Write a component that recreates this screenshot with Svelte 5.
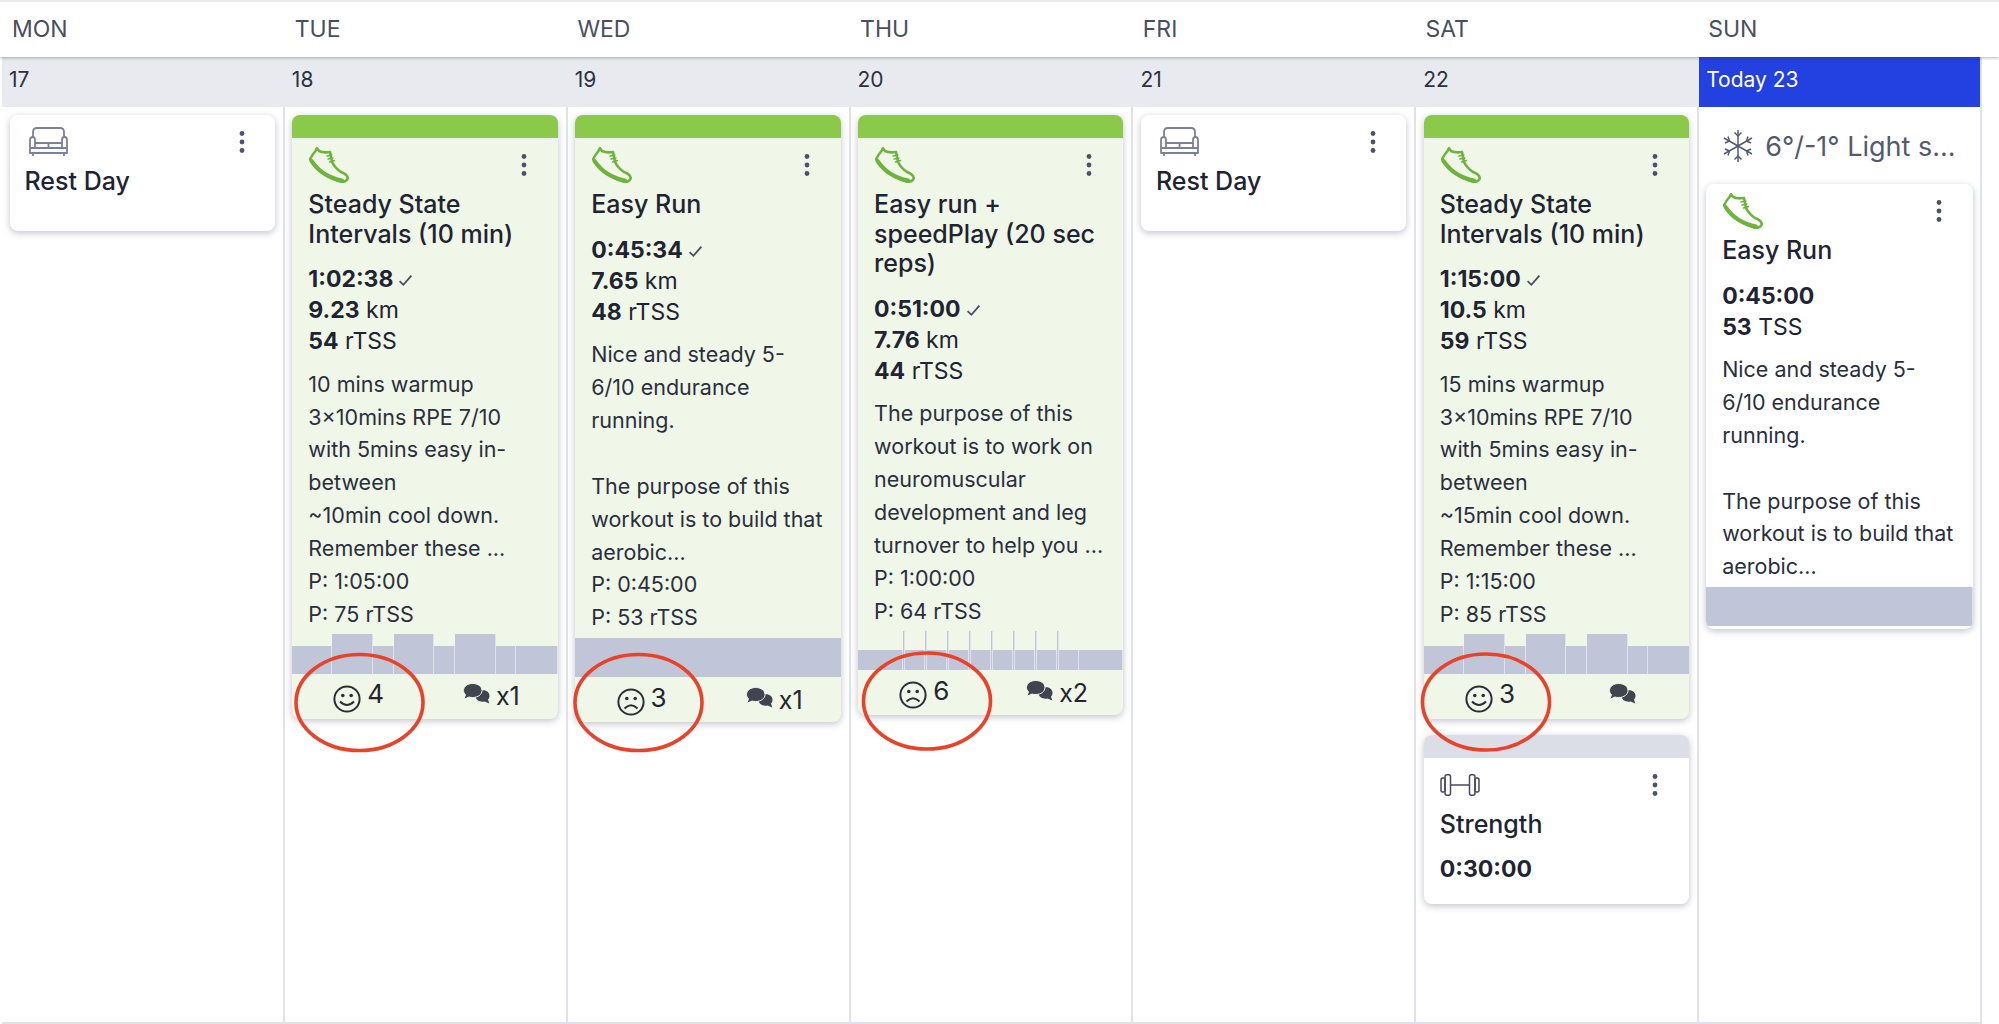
<script>
  const days = ['MON','TUE','WED','THU','FRI','SAT','SUN'];
  const steady = [[40,28],[41,40],[21,28],[40,40],[21,28],[41,40],[20,28],[42,28]];
  const flat = [[267,39]];
  const reps = [[45,20],[1.5,39],[20.5,20],[1.5,39],[20.5,20],[1.5,39],[20.5,20],[1.5,39],[20.5,20],[1.5,39],[20.5,20],[1.5,39],[20.5,20],[1.5,39],[20.5,20],[1.5,39],[20,20],[44,20]];
  const easyDesc = ['Nice and steady 5-','6/10 endurance','running.','','The purpose of this','workout is to build that','aerobic...'];
  const columns = [
    { date:'17', items:[{rest:true}] },
    { date:'18', items:[{ bar:'green', icon:'shoe', title:['Steady State','Intervals (10 min)'], stats:[['1:02:38','',true],['9.23',' km'],['54',' rTSS']],
      desc:['10 mins warmup','3×10mins RPE 7/10','with 5mins easy in-','between','~10min cool down.','Remember these ...','P: 1:05:00','P: 75 rTSS'], chart:steady, mood:'smile', score:'4', chat:'x1' }] },
    { date:'19', items:[{ bar:'green', icon:'shoe', title:['Easy Run'], stats:[['0:45:34','',true],['7.65',' km'],['48',' rTSS']],
      desc:[...easyDesc,'P: 0:45:00','P: 53 rTSS'], chart:flat, mood:'frown', score:'3', chat:'x1' }] },
    { date:'20', items:[{ bar:'green', icon:'shoe', title:['Easy run +','speedPlay (20 sec','reps)'], stats:[['0:51:00','',true],['7.76',' km'],['44',' rTSS']],
      desc:['The purpose of this','workout is to work on','neuromuscular','development and leg','turnover to help you ...','P: 1:00:00','P: 64 rTSS'], chart:reps, mood:'frown', score:'6', chat:'x2' }] },
    { date:'21', items:[{rest:true}] },
    { date:'22', items:[{ bar:'green', icon:'shoe', title:['Steady State','Intervals (10 min)'], stats:[['1:15:00','',true],['10.5',' km'],['59',' rTSS']],
      desc:['15 mins warmup','3×10mins RPE 7/10','with 5mins easy in-','between','~15min cool down.','Remember these ...','P: 1:15:00','P: 85 rTSS'], chart:steady, mood:'smile', score:'3', chat:'' },
      { bar:'gray', plain:true, icon:'bell', title:['Strength'], stats:[['0:30:00','']] }] },
    { date:'Today 23', today:true, items:[{ plain:true, icon:'shoe', title:['Easy Run'], stats:[['0:45:00',''],['53',' TSS']], desc:easyDesc, chart:flat }] }
  ];
  const rings = [[359.5,702.5],[638.5,702.5],[927,701],[1486,702]];
</script>

{#snippet kebab()}
  <svg class="kebab" viewBox="0 0 6 24" aria-hidden="true">
    <circle cx="3" cy="3.5" r="2.4"/><circle cx="3" cy="12" r="2.4"/><circle cx="3" cy="20.5" r="2.4"/>
  </svg>
{/snippet}

{#snippet shoe()}
  <svg class="ic shoe" viewBox="0 0 40 36" aria-hidden="true">
    <path class="ln" d="M8 1.2 L6.5 4 Q3 8 1.2 12 Q6 20 14 26 Q22 32 32 34.8 Q38 35 38.8 31 Q38 27 32 25 Q26 21 23 15 L21 5 Q14 6 10 4 Z"/>
    <path class="ln thick" d="M2.5 14 Q8 22 15 26.5 Q24 32 33 33.5"/>
    <path class="ln thin" d="M18 9 l5 -1 M19 12 l5 -1 M20.500 15 l5 -1.500"/>
  </svg>
{/snippet}

{#snippet sofa()}
  <svg class="ic sofa" viewBox="0 0 41 32" aria-hidden="true">
    <path d="M5 12 V6 Q5 2 9 2 H32 Q36 2 36 6 V12"/>
    <path d="M2 14 Q2 11 5 11 Q7 11 7 14 V17 H34 V14 Q34 11 36.500 11 Q39 11 39 14 V27 H2 Z"/>
    <path d="M7 17 V22 H34 V17 M20.500 22 V17 M7 22 H2 M34 22 H39"/>
    <path d="M5 27 V30 M36 27 V30"/>
  </svg>
{/snippet}

{#snippet bell()}
  <svg class="ic bell" viewBox="0 0 40 22" aria-hidden="true">
    <rect x="1" y="4" width="4" height="14" rx="1.500"/>
    <rect x="5" y="0.800" width="5.500" height="20.400" rx="2"/>
    <rect x="29.500" y="0.800" width="5.500" height="20.400" rx="2"/>
    <rect x="35" y="4" width="4" height="14" rx="1.500"/>
    <path d="M10.500 11 H29.500"/>
  </svg>
{/snippet}

{#snippet face(kind)}
  <svg class="face" viewBox="0 0 28 28" aria-hidden="true">
    <circle cx="14" cy="14" r="12.6"/>
    <circle class="eye" cx="9.800" cy="10.500" r="1.800"/><circle class="eye" cx="18.200" cy="10.500" r="1.800"/>
    {#if kind === 'smile'}
      <path d="M7 16.500 Q14 23.500 21 16.500"/>
    {:else}
      <path d="M7.500 20.500 Q14 14 20.500 20.500"/>
    {/if}
  </svg>
{/snippet}

{#snippet chatIcon()}
  <svg class="chat" viewBox="0 0 27 21" aria-hidden="true">
    <path class="back" d="M17 8 C22 6 27 9 26.500 13.500 C26.300 15 25.500 16 25 16.500 L26.300 20.500 L21.500 18.500 C17 19.500 12.500 17 12.500 13 C12.500 10.500 14.500 9 17 8 Z"/>
    <path class="front" d="M9.500 0.500 C15 0.500 19 3.500 19 7.500 C19 11.500 15 14.500 9.500 14.500 C8 14.500 7 14.300 6 14 L0.800 16.300 L2.500 11.800 C1.200 10.500 0.500 9 0.500 7.500 C0.500 3.500 4.500 0.500 9.500 0.500 Z"/>
  </svg>
{/snippet}

{#snippet checkIcon()}
  <svg class="check" viewBox="0 0 14 12" aria-hidden="true"><path d="M1.500 6.500 L5 10 L12.500 1.500"/></svg>
{/snippet}

{#snippet snow()}
  <svg class="snow" viewBox="-17 -17 34 34" aria-hidden="true">
    <path d="M0 -16 V16 M-14 -8 L14 8 M-14 8 L14 -8"/>
    <path d="M-3.500 -13.500 L0 -10 L3.500 -13.500 M-3.500 13.500 L0 10 L3.500 13.500"/>
    <path d="M-13 -3 L-8.500 -5 L-10 -9.500 M13 3 L8.500 5 L10 9.500 M-13 3 L-8.500 5 L-10 9.500 M13 -3 L8.500 -5 L10 -9.500"/>
  </svg>
{/snippet}

<div class="page">
  <div class="head">
    {#each days as d}<div class="day">{d}</div>{/each}
  </div>
  <div class="grid">
    {#each columns as col}
      <div class="col">
        <div class="date" class:today={col.today}>{col.date}</div>
        {#if col.today}
          <div class="weather">{@render snow()}<span>6°/-1° Light s...</span></div>
        {/if}
        <div class="stack">
          {#each col.items as c}
            {#if c.rest}
              <div class="card rest">
                <div class="top">{@render sofa()}{@render kebab()}</div>
                <div class="title">Rest Day</div>
              </div>
            {:else}
              <div class="card" class:done={!c.plain} class:short={c.plain && !c.chart}>
                {#if c.bar}<div class="bar {c.bar}"></div>{/if}
                <div class="body">
                  <div class="top">
                    {#if c.icon === 'shoe'}{@render shoe()}{:else}{@render bell()}{/if}
                    {@render kebab()}
                  </div>
                  <div class="title">{#each c.title as t}<div>{t}</div>{/each}</div>
                  <div class="stats">
                    {#each c.stats as s}
                      <div><b>{s[0]}</b>{s[1]}{#if s[2]}{@render checkIcon()}{/if}</div>
                    {/each}
                  </div>
                  {#if c.desc}
                    <div class="desc">{#each c.desc as l}<div class="ln-d">{l || '\u00a0'}</div>{/each}</div>
                  {/if}
                </div>
                {#if c.chart}
                  <div class="chart">
                    {#each c.chart as seg}
                      <i style="width:{seg[0]}px;height:{seg[1]}px"></i>
                    {/each}
                  </div>
                {/if}
                {#if c.mood}
                  <div class="foot">
                    <div class="cell">{@render face(c.mood)}<span class="score">{c.score}</span></div>
                    <div class="cell">{@render chatIcon()}{#if c.chat}<span class="cnt">{c.chat}</span>{/if}</div>
                  </div>
                {/if}
              </div>
            {/if}
          {/each}
        </div>
      </div>
    {/each}
  </div>
  <svg class="rings" viewBox="0 0 1999 1024" aria-hidden="true">
    {#each rings as r}<ellipse cx={r[0]} cy={r[1]} rx="63.500" ry="48"/>{/each}
  </svg>
</div>

<style>
  :global(body) { margin: 0; background: #fff; }
  .page {
    position: relative; width: 1999px; height: 1024px; overflow: hidden;
    border-top: 2px solid #e9eaf0; box-sizing: border-box;
    font-family: Inter, "Liberation Sans", sans-serif; color: #1f2433; background: #fff;
  }
  .head {
    position: relative; z-index: 2; height: 55px; padding-left: 2px; background: #fff;
    display: grid; grid-template-columns: repeat(7, 282.7px);
    box-shadow: 0 1px 3px rgba(40,45,70,.35);
  }
  .day { padding-left: 10px; line-height: 55px; font-size: 23px; color: #4a4f60; }
  .grid {
    margin-left: 2px; width: 1980px; height: 965px; display: grid;
    grid-template-columns: repeat(7, 1fr); border-bottom: 2px solid #e0e2ea;
  }
  .col { border-right: 2px solid #e0e2ea; display: flex; flex-direction: column; min-width: 0; }
  .date {
    height: 50px; line-height: 46px; padding-left: 7px; background: #e9eaf0; font-size: 21px; color: #2c3140;
    margin-right: -2px;
  }
  .date.today { background: #2340e0; color: #fff; margin-right: 0; padding-left: 7px; }
  .weather {
    height: 77px; padding: 1px 0 0 22px; box-sizing: border-box; display: flex; align-items: center; gap: 10px;
    font-size: 27px; color: #555a6e; white-space: nowrap;
  }
  .snow { width: 34px; height: 34px; flex: none; fill: none; stroke: #555a6e; stroke-width: 1.5; }
  .stack { padding: 8px 8px 0 7.5px; display: flex; flex-direction: column; gap: 16px; }
  .col:last-child .stack { padding-top: 0; padding-left: 7px; padding-right: 7px; }
  .card {
    background: #fff; border-radius: 8px; overflow: hidden;
    box-shadow: 0 2px 7px rgba(35,40,70,.28);
  }
  .card.done { background: #f0f6e8; }
  .card.rest { height: 116px; padding: 0 15px; box-sizing: border-box; }
  .bar { height: 23px; }
  .bar.green { background: #8ac949; }
  .bar.gray { background: #dcdee7; }
  .body { padding: 0 16px; }
  .short .body { padding-bottom: 18px; }
  .card:not(.done):not(.short):not(.rest) { padding-bottom: 3px; }
  .top { height: 52px; padding-top: 2px; box-sizing: border-box; display: flex; align-items: center; justify-content: space-between; }
  .kebab { width: 6px; height: 24px; fill: #4d5268; margin-right: 15px; }
  .ic { display: block; flex: none; }
  .shoe { width: 40px; height: 36px; margin-left: 1px; }
  .ln { fill: none; stroke: #6cb53c; stroke-width: 2.6; stroke-linejoin: round; stroke-linecap: round; }
  .ln.thick { stroke-width: 4; }
  .ln.thin { stroke-width: 1.4; }
  .sofa { width: 41px; height: 32px; margin-left: 3px; fill: none; stroke: #7b8199; stroke-width: 1.8; stroke-linejoin: round; }
  .bell { width: 40px; height: 22px; fill: none; stroke: #4a4560; stroke-width: 1.5; }
  .title { font-size: 25px; line-height: 29.5px; font-weight: 500; color: #1f2433; white-space: nowrap; }
  .stats { margin-top: 15px; font-size: 23px; line-height: 31.2px; color: #1f2433; white-space: nowrap; }
  .stats b { font-weight: 700; }
  .check { width: 15px; height: 13px; margin-left: 5px; fill: none; stroke: #4a4f60; stroke-width: 1.7; }
  .desc { margin-top: 10px; font-size: 21.500px; line-height: 32.9px; color: #2a2f3d; white-space: nowrap; }
  .chart { margin-top: 2px; height: 41px; display: flex; align-items: flex-end; gap: 0; }
  .chart i { display: block; flex: none; background: #c0c6d8; box-shadow: inset -1px 0 0 #dfe2ea; }
  .foot { height: 45px; display: flex; }
  .cell { flex: 1; display: flex; justify-content: center; align-items: center; gap: 6px; }
  .face { width: 28px; height: 28px; fill: none; stroke: #2d2f38; stroke-width: 2; margin-top: 5px; }
  .eye { fill: #2d2f38; stroke: none; }
  .score { font-size: 26px; color: #23262f; margin-top: -5px; }
  .cnt { font-size: 25px; color: #23262f; }
  .chat { width: 27px; height: 21px; margin-top: -5px; }
  .back { fill: #3f444e; }
  .front { fill: #3f444e; stroke: #f0f6e8; stroke-width: 1; }
  .rings { position: absolute; left: 0; top: -2px; width: 1999px; height: 1024px; z-index: 3; pointer-events: none; }
  .rings ellipse { fill: none; stroke: #e8432a; stroke-width: 3.6; }
</style>
